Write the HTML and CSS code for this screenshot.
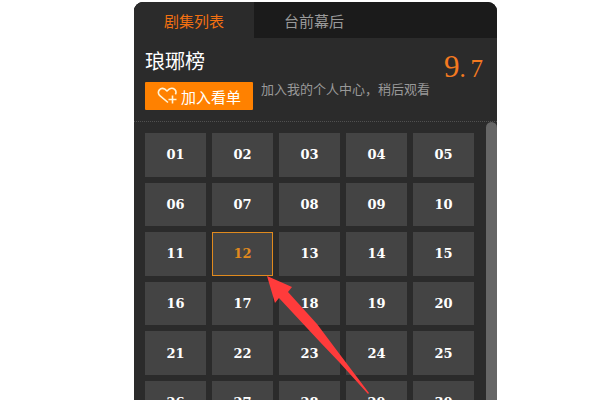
FILE: index.html
```
<!DOCTYPE html>
<html lang="zh-CN">
<head>
    <meta charset="UTF-8">
    <meta name="viewport" content="width=device-width, initial-scale=1.0">
    <title>琅琊榜</title>
    <link rel="stylesheet" href="styles.css">
</head>
<body>
    <div class="panel">
        <!-- Tabs -->
        <div class="tabs">
            <button class="tab active">剧集列表</button>
            <button class="tab">台前幕后</button>
        </div>

        <!-- Show info -->
        <div class="info">
            <div class="info-main">
                <h1>琅琊榜</h1>
                <div class="actions">
                    <button class="add-btn">
                        <svg class="heart" viewBox="0 0 20 18" width="20" height="18">
                            <path d="M11 15.5 L2.6 8.4 C-0.6 4.4 3.6 -0.2 7.6 2 L10 4 L12.4 2 C16.4 -0.2 20.4 3.6 18.4 7.4"/>
                            <path d="M15.5 8.5 V16.5 M11.5 12.5 H19.5"/>
                        </svg>
                        <span>加入看单</span>
                    </button>
                    <span class="hint">加入我的个人中心，稍后观看</span>
                </div>
            </div>
            <div class="score"><span class="score-int">9</span><span class="score-dot">.</span><span>7</span></div>
        </div>

        <!-- Episodes -->
        <div class="list">
            <div class="episodes">
                <button class="episode">01</button>
                <button class="episode">02</button>
                <button class="episode">03</button>
                <button class="episode">04</button>
                <button class="episode">05</button>
                <button class="episode">06</button>
                <button class="episode">07</button>
                <button class="episode">08</button>
                <button class="episode">09</button>
                <button class="episode">10</button>
                <button class="episode">11</button>
                <button class="episode current">12</button>
                <button class="episode">13</button>
                <button class="episode">14</button>
                <button class="episode">15</button>
                <button class="episode">16</button>
                <button class="episode">17</button>
                <button class="episode">18</button>
                <button class="episode">19</button>
                <button class="episode">20</button>
                <button class="episode">21</button>
                <button class="episode">22</button>
                <button class="episode">23</button>
                <button class="episode">24</button>
                <button class="episode">25</button>
                <button class="episode">26</button>
                <button class="episode">27</button>
                <button class="episode">28</button>
                <button class="episode">29</button>
                <button class="episode">30</button>
            </div>
            <div class="scrollbar"></div>
            <svg class="arrow" viewBox="0 0 104 119" width="104" height="119">
                <path d="M0 0 L25 11 L21 16 L50 48 L71 76 L102 117 L101 118 L73 87 L53 66 L12 22 L8 27 Z"/>
            </svg>
        </div>
    </div>
</body>
</html>
```

FILE: styles.css
```
* {
    box-sizing: border-box;
}
body {
    margin: 0;
    background: #fff;
    font-family: "Noto Sans CJK SC", sans-serif;
    overflow: hidden;
}
button {
    border: none;
    padding: 0;
    font-family: inherit;
    cursor: pointer;
}
.panel {
    display: flex;
    flex-direction: column;
    height: 100vh;
    margin: 2px 103px 0 134px;
    background: #2b2b2b;
    border-radius: 9px 9px 0 0;
    overflow: hidden;
}
.tabs {
    display: flex;
    background: #1b1b1b;
}
.tab {
    width: 120px;
    height: 36px;
    background: none;
    color: #999;
    font-size: 15px;
}
.tab.active {
    background: #2b2b2b;
    color: #f27011;
}
.info {
    display: flex;
    justify-content: space-between;
    padding: 9px 14px 11px 11px;
    border-bottom: 1px dotted #505050;
}
h1 {
    margin: 0;
    color: #fff;
    font-size: 20px;
    font-weight: normal;
    line-height: 28px;
}
.actions {
    display: flex;
    gap: 8px;
    margin-top: 7px;
}
.add-btn {
    display: flex;
    align-items: center;
    justify-content: center;
    gap: 4px;
    width: 108px;
    height: 28px;
    background: #ff8100;
    border-radius: 1px;
    color: #fff;
    font-size: 15px;
}
.heart {
    fill: none;
    stroke: #fff3d6;
    stroke-width: 1.6;
}
.hint {
    color: #999;
    font-size: 13px;
    line-height: 14px;
    white-space: nowrap;
}
.score {
    color: #f47a20;
    font-family: "Liberation Serif", serif;
    font-size: 25px;
    line-height: 40px;
    white-space: nowrap;
}
.score-int {
    font-size: 31px;
}
.score-dot {
    display: inline-block;
    width: 11px;
}
.list {
    position: relative;
    display: flex;
    flex: 1;
    min-height: 0;
    align-items: stretch;
}
.episodes {
    display: grid;
    flex: 1;
    grid-template-columns: repeat(5, 1fr);
    align-content: start;
    gap: 6px;
    padding: 11px 12px 0 11px;
}
.episode {
    aspect-ratio: 7 / 5;
    background: #444;
    color: #fff;
    font-family: "DejaVu Serif", serif;
    font-size: 13px;
    font-weight: bold;
}
.episode.current {
    border: 1px solid #e08a1e;
    color: #e08a1e;
}
.scrollbar {
    width: 11px;
    background: #666;
    border-radius: 6px 6px 0 0;
}
/* pointer to the current episode */
.arrow {
    position: absolute;
    top: 154px;
    left: 133px;
    fill: #ff3b3b;
    pointer-events: none;
}
```
